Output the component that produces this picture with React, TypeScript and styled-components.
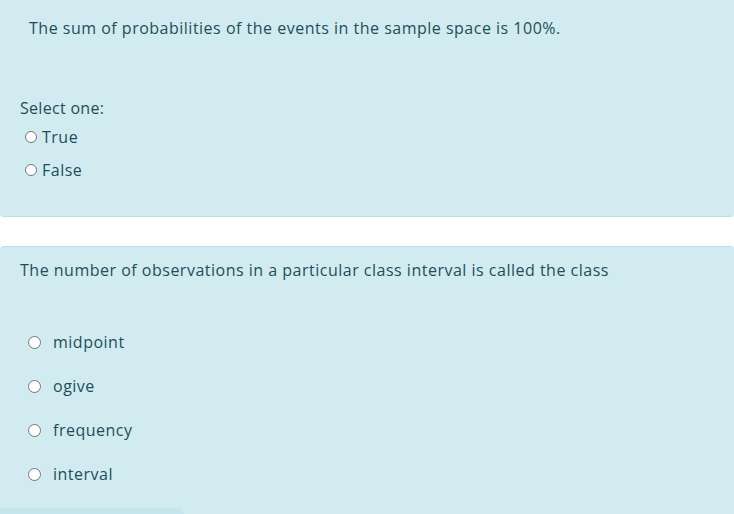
import React from "react";
import styled, { createGlobalStyle } from "styled-components";

const Global = createGlobalStyle`
  html, body { margin: 0; padding: 0; background: #ffffff; }
  body { font-family: "Open Sans", "Noto Sans", sans-serif; color: #1d4f5b; overflow: hidden; }
`;

const Page = styled.div`
  display: flex;
  flex-direction: column;
  width: 734px;
`;

const Card = styled.div<{ $top?: boolean }>`
  background: #d1ebf0;
  ${(p) =>
    p.$top
      ? `border-bottom: 1px solid #b9e1e9; border-radius: 0 0 4px 4px; padding: 16px 0 34px 20px;`
      : `border-top: 1px solid #b9e1e9; border-radius: 4px 4px 0 0; margin-top: 29px; padding: 11px 0 0 0;`}
  display: flex;
  flex-direction: column;
`;

const QText = styled.div<{ $indent: number }>`
  font-size: 16px;
  letter-spacing: 0.5px;
  line-height: 24px;
  padding-left: ${(p) => p.$indent}px;
  white-space: nowrap;
`;

const Prompt = styled.div`
  font-size: 16px;
  letter-spacing: 0.3px;
  line-height: 24px;
  margin-top: 56px;
`;

const OptionList = styled.div<{ $gap: number; $top: number }>`
  display: flex;
  flex-direction: column;
  gap: ${(p) => p.$gap}px;
  margin-top: ${(p) => p.$top}px;
`;

const Option = styled.label<{ $h: number; $indent: number; $gap: number }>`
  display: flex;
  align-items: center;
  height: ${(p) => p.$h}px;
  padding-left: ${(p) => p.$indent}px;
  gap: ${(p) => p.$gap}px;
  font-size: 16px;
  letter-spacing: 0.5px;
`;

const Radio = styled.span<{ $size: number }>`
  width: ${(p) => p.$size}px;
  height: ${(p) => p.$size}px;
  box-sizing: border-box;
  border-radius: 50%;
  border: 1px solid #767676;
  background: #ffffff;
  flex: none;
`;

const Footer = styled.div`
  margin-top: 12px;
  width: 184px;
  height: 20px;
  background: #c4e5eb;
  border-radius: 0 6px 0 0;
`;

export default function App() {
  return (
    <Page>
      <Global />
      <Card $top>
        <QText $indent={9}>The sum of probabilities of the events in the sample space is 100%.</QText>
        <Prompt>Select one:</Prompt>
        <OptionList $gap={9} $top={5}>
          {["True", "False"].map((o) => (
            <Option key={o} $h={24} $indent={5} $gap={5}>
              <Radio $size={12} />
              {o}
            </Option>
          ))}
        </OptionList>
      </Card>
      <Card>
        <QText $indent={20}>The number of observations in a particular class interval is called the class</QText>
        <OptionList $gap={0} $top={38}>
          {["midpoint", "ogive", "frequency", "interval"].map((o) => (
            <Option key={o} $h={44} $indent={28} $gap={12}>
              <Radio $size={13} />
              {o}
            </Option>
          ))}
        </OptionList>
        <Footer />
      </Card>
    </Page>
  );
}
